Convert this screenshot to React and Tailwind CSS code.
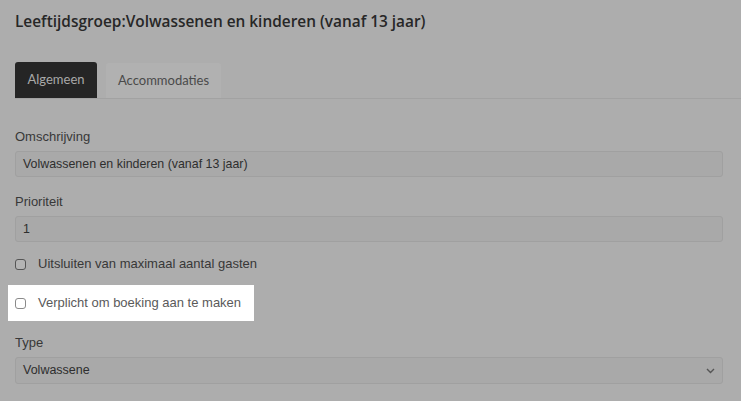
import React from "react";

const Field = ({ label, children }) => (
  <div>
    <div className="text-[13px] leading-[18px] text-[#383838] mb-[5px]">{label}</div>
    {children}
  </div>
);

const Box = ({ light }) => (
  <span
    className={
      "inline-block w-[11px] h-[11px] rounded-[3px] border " +
      (light ? "border-[#8a8a8a] bg-white" : "border-[#555] bg-[#b4b4b4]")
    }
  />
);

export default function App() {
  return (
    <div
      className="w-[741px] h-[401px] overflow-hidden bg-[#adadad] pl-[15px] pr-[18px]"
      style={{ fontFamily: '"Liberation Sans", Arial, sans-serif' }}
    >
      <h1
        className="pt-[12px] text-[15.4px] leading-[20px] font-semibold text-[#272727]"
        style={{ fontFamily: '"Open Sans", Lato, sans-serif' }}
      >
        Leeftijdsgroep:Volwassenen en kinderen (vanaf 13 jaar)
      </h1>

      <div className="mt-[30px] flex items-end gap-[9px] border-b border-[#a2a2a2] h-[37px] -mr-[18px]">
        <div
          className="h-[36px] w-[82px] flex items-center justify-center rounded-t-[3px] bg-[#252525] text-[13px] text-[#a9a9a9]"
          style={{ fontFamily: 'Lato, "Open Sans", sans-serif' }}
        >
          Algemeen
        </div>
        <div
          className="h-[35px] w-[115px] flex items-center justify-center rounded-t-[3px] bg-[#b1b1b1] text-[13px] text-[#4a4a4a]"
          style={{ fontFamily: 'Lato, "Open Sans", sans-serif' }}
        >
          Accommodaties
        </div>
      </div>

      <div className="mt-[29px]">
        <Field label="Omschrijving">
          <div className="h-[26px] rounded-[3px] border border-[#a0a0a0] bg-[#a9a9a9] px-[7px] flex items-center text-[12.4px] text-[#2e2e2e]">
            Volwassenen en kinderen (vanaf 13 jaar)
          </div>
        </Field>
      </div>

      <div className="mt-[16px]">
        <Field label="Prioriteit">
          <div className="h-[26px] rounded-[3px] border border-[#a0a0a0] bg-[#a9a9a9] px-[7px] flex items-center text-[12.4px] text-[#2e2e2e]">
            1
          </div>
        </Field>
      </div>

      <label className="mt-[13px] h-[18px] flex items-center gap-[12px] text-[13px] text-[#383838]">
        <Box />
        Uitsluiten van maximaal aantal gasten
      </label>

      <label className="mt-[12px] -ml-[7px] w-[246px] h-[36px] bg-white px-[7px] flex items-center gap-[12px] text-[13px] text-[#5a5a5a]">
        <Box light />
        Verplicht om boeking aan te maken
      </label>

      <div className="mt-[13px]">
        <Field label="Type">
          <div className="h-[27px] rounded-[3px] border border-[#a0a0a0] bg-[#a9a9a9] pl-[7px] pr-[7px] flex items-center justify-between text-[12.5px] text-[#2e2e2e]">
            <span>Volwassene</span>
            <svg width="9" height="6" viewBox="0 0 9 6" fill="none">
              <path d="M1 1l3.5 3.5L8 1" stroke="#555" strokeWidth="1.4" />
            </svg>
          </div>
        </Field>
      </div>
    </div>
  );
}
